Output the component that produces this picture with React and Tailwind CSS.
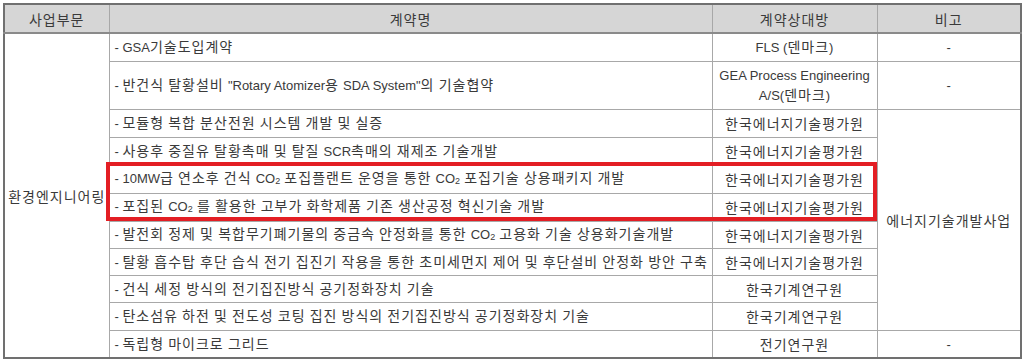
const L = ({ children }) => (
  <span className="font-['Liberation_Sans'] text-[13px] tracking-normal">{children}</span>
);

const CO2 = () => (
  <L>
    CO<span className="text-[9px] align-[-1px]">2</span>
  </L>
);

const rows = [
  {
    name: (
      <>
        <L>GSA</L>기술도입계약
      </>
    ),
    partner: (
      <>
        <L>FLS (</L>덴마크<L>)</L>
      </>
    ),
    h: 'h-[28px]',
  },
  {
    name: (
      <>
        반건식 탈황설비 <L>"Rotary Atomizer</L>용 <L>SDA System"</L>의 기술협약
      </>
    ),
    partner: (
      <>
        <L>GEA Process Engineering</L>
        <br />
        <L>A/S(</L>덴마크<L>)</L>
      </>
    ),
    h: 'h-[48px]',
  },
  { name: '모듈형 복합 분산전원 시스템 개발 및 실증', partner: '한국에너지기술평가원', h: 'h-[28px]' },
  {
    name: (
      <>
        사용후 중질유 탈황촉매 및 탈질 <L>SCR</L>촉매의 재제조 기술개발
      </>
    ),
    partner: '한국에너지기술평가원',
    h: 'h-[28px]',
  },
  {
    name: (
      <>
        <L>10MW</L>급 연소후 건식 <CO2 /> 포집플랜트 운영을 통한 <CO2 /> 포집기술 상용패키지 개발
      </>
    ),
    partner: '한국에너지기술평가원',
    h: 'h-[28px]',
  },
  {
    name: (
      <>
        포집된 <CO2 /> 를 활용한 고부가 화학제품 기존 생산공정 혁신기술 개발
      </>
    ),
    partner: '한국에너지기술평가원',
    h: 'h-[28px]',
  },
  {
    name: (
      <>
        발전회 정제 및 복합무기폐기물의 중금속 안정화를 통한 <CO2 /> 고용화 기술 상용화기술개발
      </>
    ),
    partner: '한국에너지기술평가원',
    h: 'h-[27px]',
  },
  {
    name: '탈황 흡수탑 후단 습식 전기 집진기 작용을 통한 초미세먼지 제어 및 후단설비 안정화 방안 구축',
    partner: '한국에너지기술평가원',
    h: 'h-[27px]',
  },
  { name: '건식 세정 방식의 전기집진방식 공기정화장치 기술', partner: '한국기계연구원', h: 'h-[27px]' },
  { name: '탄소섬유 하전 및 전도성 코팅 집진 방식의 전기집진방식 공기정화장치 기술', partner: '한국기계연구원', h: 'h-[28px]' },
  { name: '독립형 마이크로 그리드', partner: '전기연구원', h: 'h-[28px]' },
];

export default function App() {
  const cell = 'border border-[#a8a8a8] p-0';
  return (
    <div
      className="w-[1024px] h-[359px] bg-white pt-[3px] pl-[3px] text-[#3a3a3a] text-[14px] tracking-[1px] overflow-hidden"
      style={{ fontFamily: '"Noto Sans CJK KR", "Liberation Sans", sans-serif' }}
    >
      <div className="relative w-[1017px]">
        <table className="w-[1017px] table-fixed border-collapse border-2 border-[#707070] leading-[18px]">
          <colgroup>
            <col className="w-[105px]" />
            <col className="w-[603px]" />
            <col className="w-[165px]" />
            <col className="w-[144px]" />
          </colgroup>
          <thead>
            <tr className="h-[29px] bg-[#d6d6d6]">
              <th className={`${cell} font-normal text-center border-b-2 border-b-[#8a8a8a]`}>사업부문</th>
              <th className={`${cell} font-normal text-center border-b-2 border-b-[#8a8a8a]`}>계약명</th>
              <th className={`${cell} font-normal text-center border-b-2 border-b-[#8a8a8a]`}>계약상대방</th>
              <th className={`${cell} font-normal text-center border-b-2 border-b-[#8a8a8a]`}>비고</th>
            </tr>
          </thead>
          <tbody>
            {rows.map((r, i) => (
              <tr key={i} className={r.h}>
                {i === 0 && (
                  <td rowSpan={11} className={`${cell} text-center align-middle`}>
                    환경엔지니어링
                  </td>
                )}
                <td className={`${cell} pl-[5px] text-left whitespace-nowrap`}>
                  <L>- </L>
                  {r.name}
                </td>
                <td className={`${cell} text-center whitespace-nowrap`}>{r.partner}</td>
                {(i === 0 || i === 1 || i === 10) && (
                  <td className={`${cell} text-center`}>
                    <L>-</L>
                  </td>
                )}
                {i === 2 && (
                  <td rowSpan={8} className={`${cell} text-center align-middle`}>
                    에너지기술개발사업
                  </td>
                )}
              </tr>
            ))}
          </tbody>
        </table>
        <div className="absolute left-[103px] top-[159px] w-[771px] h-[59px] border-4 border-[#e31e24] pointer-events-none" />
      </div>
    </div>
  );
}
